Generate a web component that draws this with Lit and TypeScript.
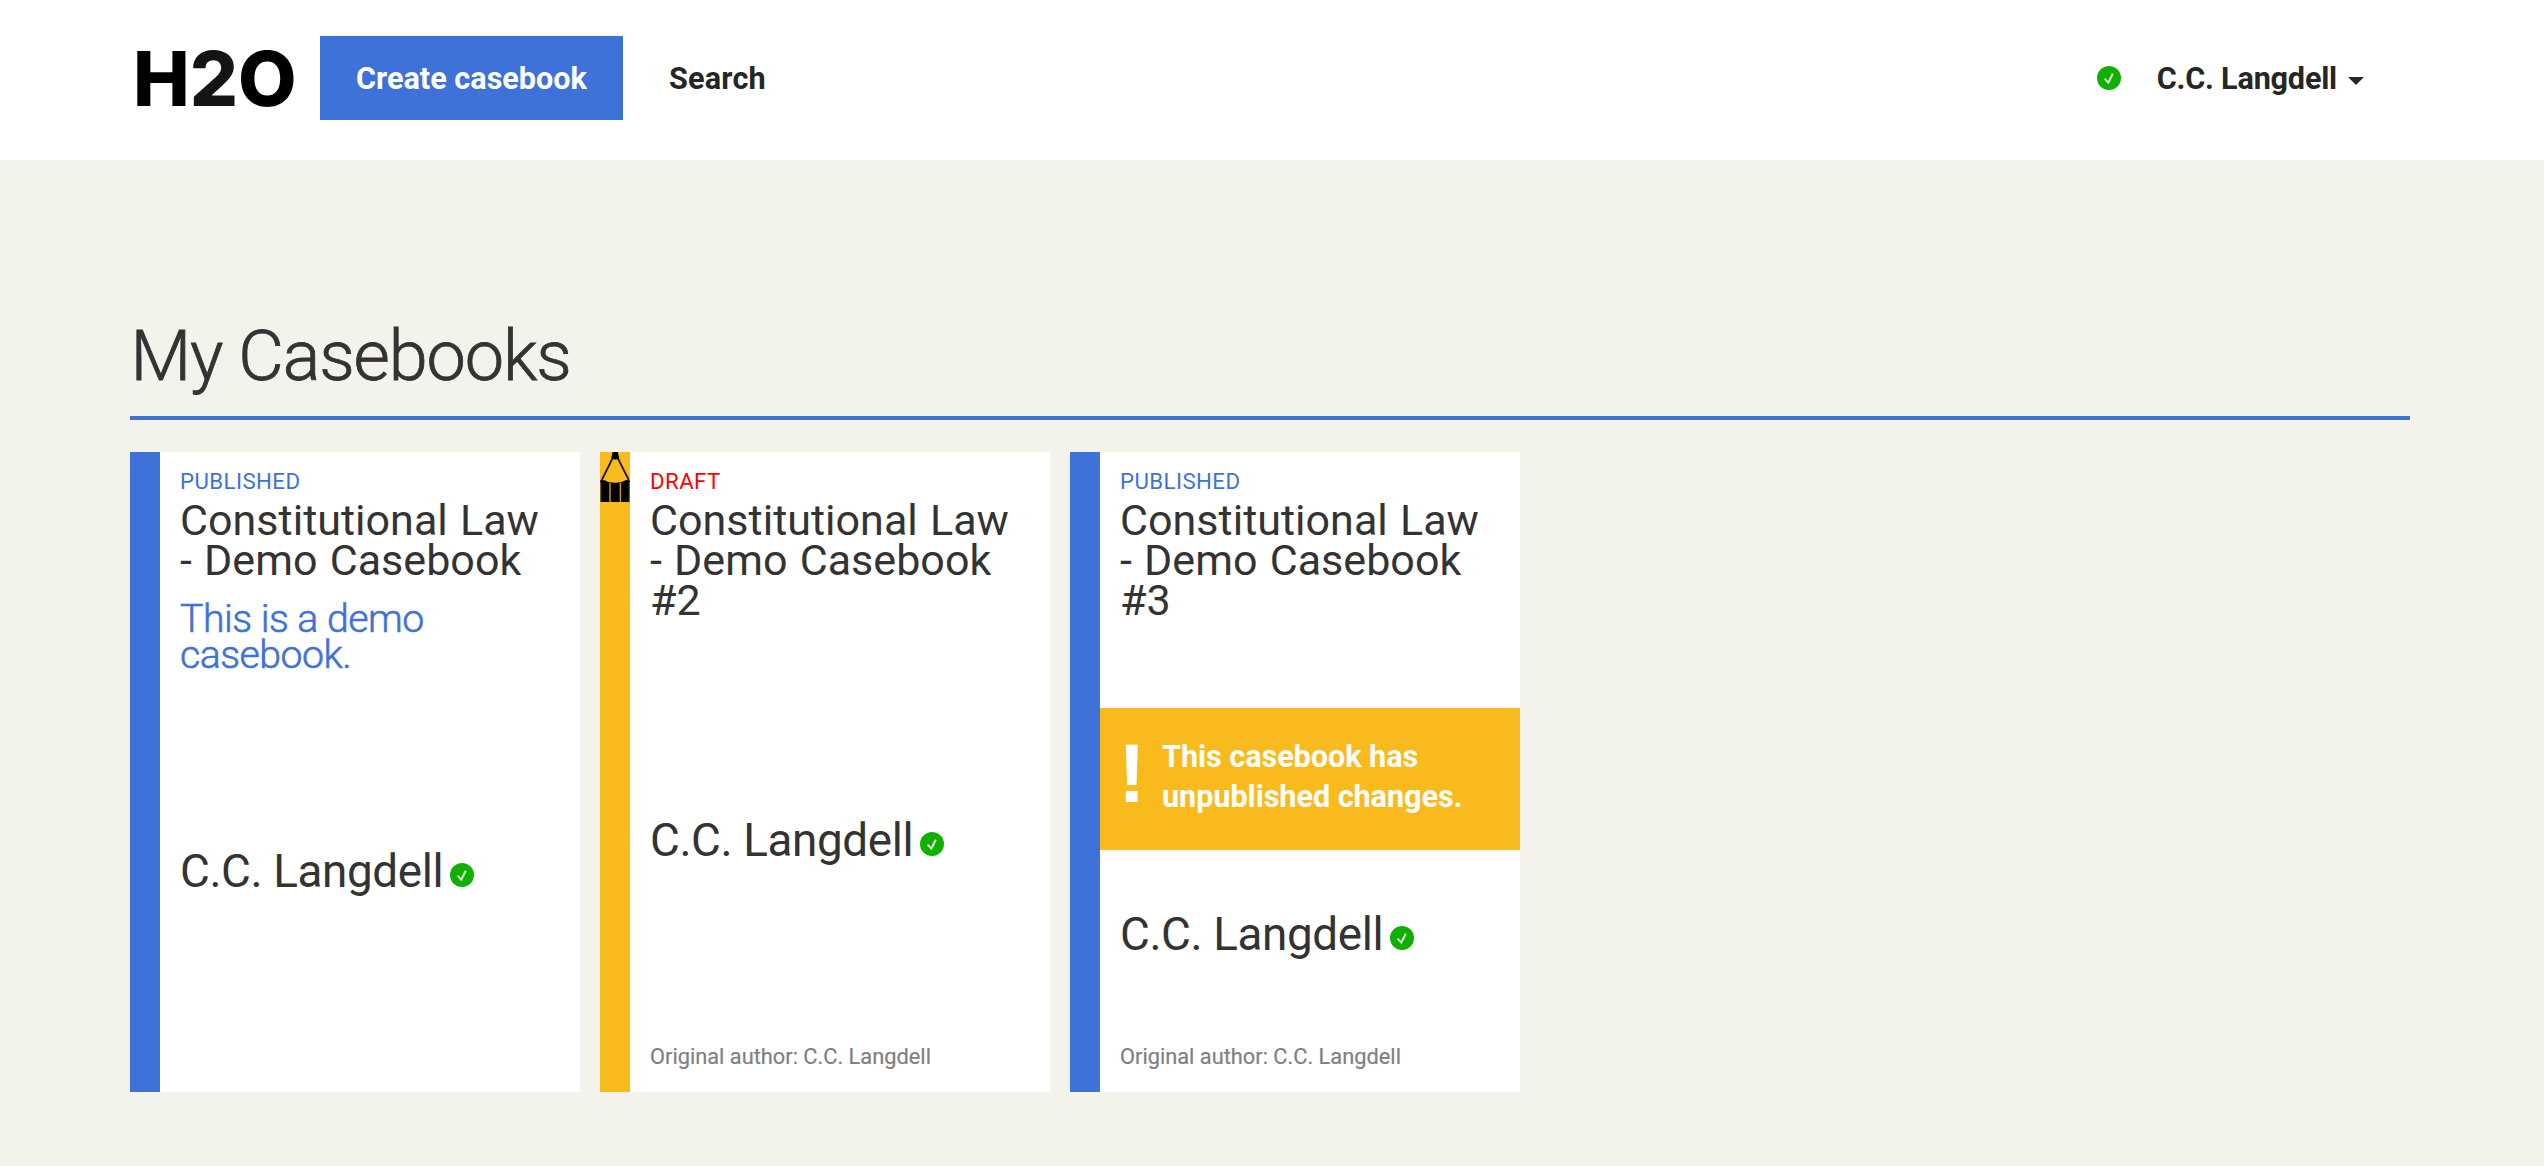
import { LitElement, html, svg, css, nothing } from "lit";
import { customElement, property } from "lit/decorators.js";
import { classMap } from "lit/directives/class-map.js";

interface Casebook {
  status: "published" | "draft";
  title: string;
  subtitle?: string;
  author: string;
  originalAuthor?: string;
  unpublishedChanges?: boolean;
}

const casebooks: Casebook[] = [
  {
    status: "published",
    title: "Constitutional Law - Demo Casebook",
    subtitle: "This is a demo casebook.",
    author: "C.C. Langdell",
  },
  {
    status: "draft",
    title: "Constitutional Law - Demo Casebook #2",
    author: "C.C. Langdell",
    originalAuthor: "C.C. Langdell",
  },
  {
    status: "published",
    title: "Constitutional Law - Demo Casebook #3",
    author: "C.C. Langdell",
    originalAuthor: "C.C. Langdell",
    unpublishedChanges: true,
  },
];

/** Green disc with a tick, shown beside verified professors. */
@customElement("verified-badge")
export class VerifiedBadge extends LitElement {
  static styles = css`
    :host {
      display: block;
      width: 24px;
      height: 24px;
      flex: none;
    }
    .icon {
      display: block;
    }
  `;

  render() {
    return html`<svg class="icon" width="24" height="24" viewBox="0 0 24 24">
      <circle cx="12" cy="12" r="12" fill="#11b000" />
      <path d="M7.6 12.6 L11.3 16.6 L15.8 7.8" fill="none" stroke="#d9f4d6" stroke-width="2" />
    </svg>`;
  }
}

@customElement("casebook-card")
export class CasebookCard extends LitElement {
  @property({ attribute: false }) book!: Casebook;

  static styles = css`
    :host {
      display: block;
    }
    .card {
      display: flex;
      width: 450px;
      height: 640px;
      background: #fff;
      color: #333;
    }
    .spine {
      width: 30px;
      flex: none;
      background: #3e72d8;
    }
    .draft .spine {
      background: #f9ba1e;
    }
    .pencil {
      display: block;
    }
    .body {
      flex: 1;
      display: flex;
      flex-direction: column;
      min-width: 0;
    }
    .head {
      box-sizing: border-box;
      height: 392px;
      padding: 15px 20px 0;
    }
    .draft .head {
      height: 361px;
    }
    .changed .head {
      height: 256px;
    }
    .status {
      margin-bottom: 5px;
      font-size: 22.2px;
      line-height: 28px;
      letter-spacing: 0.45px;
      text-transform: uppercase;
      color: #3e72d8;
    }
    .draft .status {
      color: #f00;
    }
    .title {
      margin: 0;
      font-size: 43px;
      font-weight: 400;
      line-height: 40px;
      letter-spacing: 0.03px;
      word-spacing: 1.5px;
    }
    .subtitle {
      width: 300px;
      margin-top: 21px;
      font-size: 39.2px;
      font-weight: 300;
      line-height: 36px;
      letter-spacing: -0.5px;
      color: #3e72d8;
      -webkit-text-stroke: 0.6px #3e72d8;
    }
    .notice {
      display: flex;
      box-sizing: border-box;
      height: 142px;
      margin-bottom: 57px;
      padding: 29px 10px 0 18px;
      background: #f9ba1e;
      color: #fff;
      font-size: 30.6px;
      font-weight: 700;
      line-height: 40px;
      letter-spacing: -0.05px;
    }
    .mark {
      width: 44px;
      flex: none;
      font-family: "Liberation Sans", Arial, sans-serif;
      font-size: 83px;
      line-height: 74px;
    }
    .author {
      display: flex;
      align-items: center;
      gap: 7px;
      padding-left: 20px;
      font-size: 45.8px;
      line-height: 56px;
      letter-spacing: -0.38px;
    }
    .badge {
      margin-top: 5px;
    }
    .original {
      margin-top: auto;
      padding: 0 20px 21px;
      font-size: 21.8px;
      line-height: 28px;
      color: #808080;
      -webkit-text-stroke: 0.2px #808080;
    }
  `;

  private pencil() {
    return html`<svg class="pencil" width="30" height="50" viewBox="0 0 30 50">
      ${svg`
        <path d="M0 28.5 Q4 27 8 30 Q15 31.5 22 30 Q26 27 30 28.5 V50 H0 Z" fill="#000" />
        <path d="M15.2 1 L1.8 28 M15.2 1 L28.8 28" fill="none" stroke="#1a1403" stroke-width="1.7" />
        <path d="M12.6 0 H17.8 L19.2 6.5 Q15.2 8.5 11.2 6.5 Z" fill="#000" />
        <path d="M10 31 V50 M20.4 31 V50" stroke="#d09c1a" stroke-width="1.4" />
        <path d="M0.6 30 V50 M29.4 30 V50" stroke="#7a5b10" stroke-width="1.2" />
      `}
    </svg>`;
  }

  render() {
    const b = this.book;
    return html`<article
      class=${classMap({ card: true, draft: b.status === "draft", changed: !!b.unpublishedChanges })}
    >
      <div class="spine">${b.status === "draft" ? this.pencil() : nothing}</div>
      <div class="body">
        <div class="head">
          <div class="status">${b.status}</div>
          <h2 class="title">${b.title}</h2>
          ${b.subtitle ? html`<div class="subtitle">${b.subtitle}</div>` : nothing}
        </div>
        ${b.unpublishedChanges
          ? html`<div class="notice">
              <div class="mark">!</div>
              <div>This casebook has unpublished changes.</div>
            </div>`
          : nothing}
        <div class="author">
          <span>${b.author}</span>
          <verified-badge class="badge"></verified-badge>
        </div>
        ${b.originalAuthor
          ? html`<div class="original">Original author: ${b.originalAuthor}</div>`
          : nothing}
      </div>
    </article>`;
  }
}

@customElement("app-root")
export class AppRoot extends LitElement {
  static styles = css`
    :host {
      display: block;
      min-height: 100vh;
      background: #f4f3eb;
      font-family: Roboto, "Liberation Sans", sans-serif;
      color: #333;
    }
    .header {
      display: flex;
      align-items: center;
      box-sizing: border-box;
      height: 160px;
      padding: 0 180px 4px 130px;
      background: #fff;
      color: #262626;
      font-size: 30.6px;
      font-weight: 700;
      line-height: 83px;
    }
    .logo {
      box-sizing: border-box;
      width: 190px;
      margin-top: 2px;
      padding-left: 3px;
      font-family: Inter, sans-serif;
      font-size: 75.8px;
      font-weight: 800;
      line-height: 84px;
      color: #000;
    }
    .two {
      color: #141414;
    }
    .create {
      width: 303px;
      padding-top: 1px;
      background: #3e72d8;
      color: #fff;
      text-align: center;
    }
    .search {
      margin-left: 46px;
      padding-top: 1px;
      letter-spacing: 0.2px;
    }
    .user {
      display: flex;
      align-items: center;
      margin-left: auto;
    }
    .name {
      margin: 0 11px 0 36px;
      padding-top: 1px;
      letter-spacing: -0.2px;
    }
    .caret {
      margin-top: 6px;
      border: 8px solid transparent;
      border-top-color: #262626;
      border-bottom: 0;
    }
    .main {
      padding: 146px 134px 0 130px;
    }
    .heading {
      margin: 0 0 32px;
      height: 110px;
      border-bottom: 4px solid #3e72d8;
      font-size: 70.2px;
      font-weight: 300;
      line-height: 100px;
      letter-spacing: -1.15px;
      text-indent: 0.5px;
      -webkit-text-stroke: 0.8px #333;
    }
    .list {
      display: flex;
      gap: 20px;
    }
  `;

  render() {
    return html`
      <header class="header">
        <div class="logo">H<span class="two">2</span>O</div>
        <div class="create">Create casebook</div>
        <div class="search">Search</div>
        <div class="user">
          <verified-badge></verified-badge>
          <span class="name">C.C. Langdell</span>
          <span class="caret"></span>
        </div>
      </header>
      <main class="main">
        <h1 class="heading">My Casebooks</h1>
        <div class="list">
          ${casebooks.map((b) => html`<casebook-card .book=${b}></casebook-card>`)}
        </div>
      </main>
    `;
  }
}
